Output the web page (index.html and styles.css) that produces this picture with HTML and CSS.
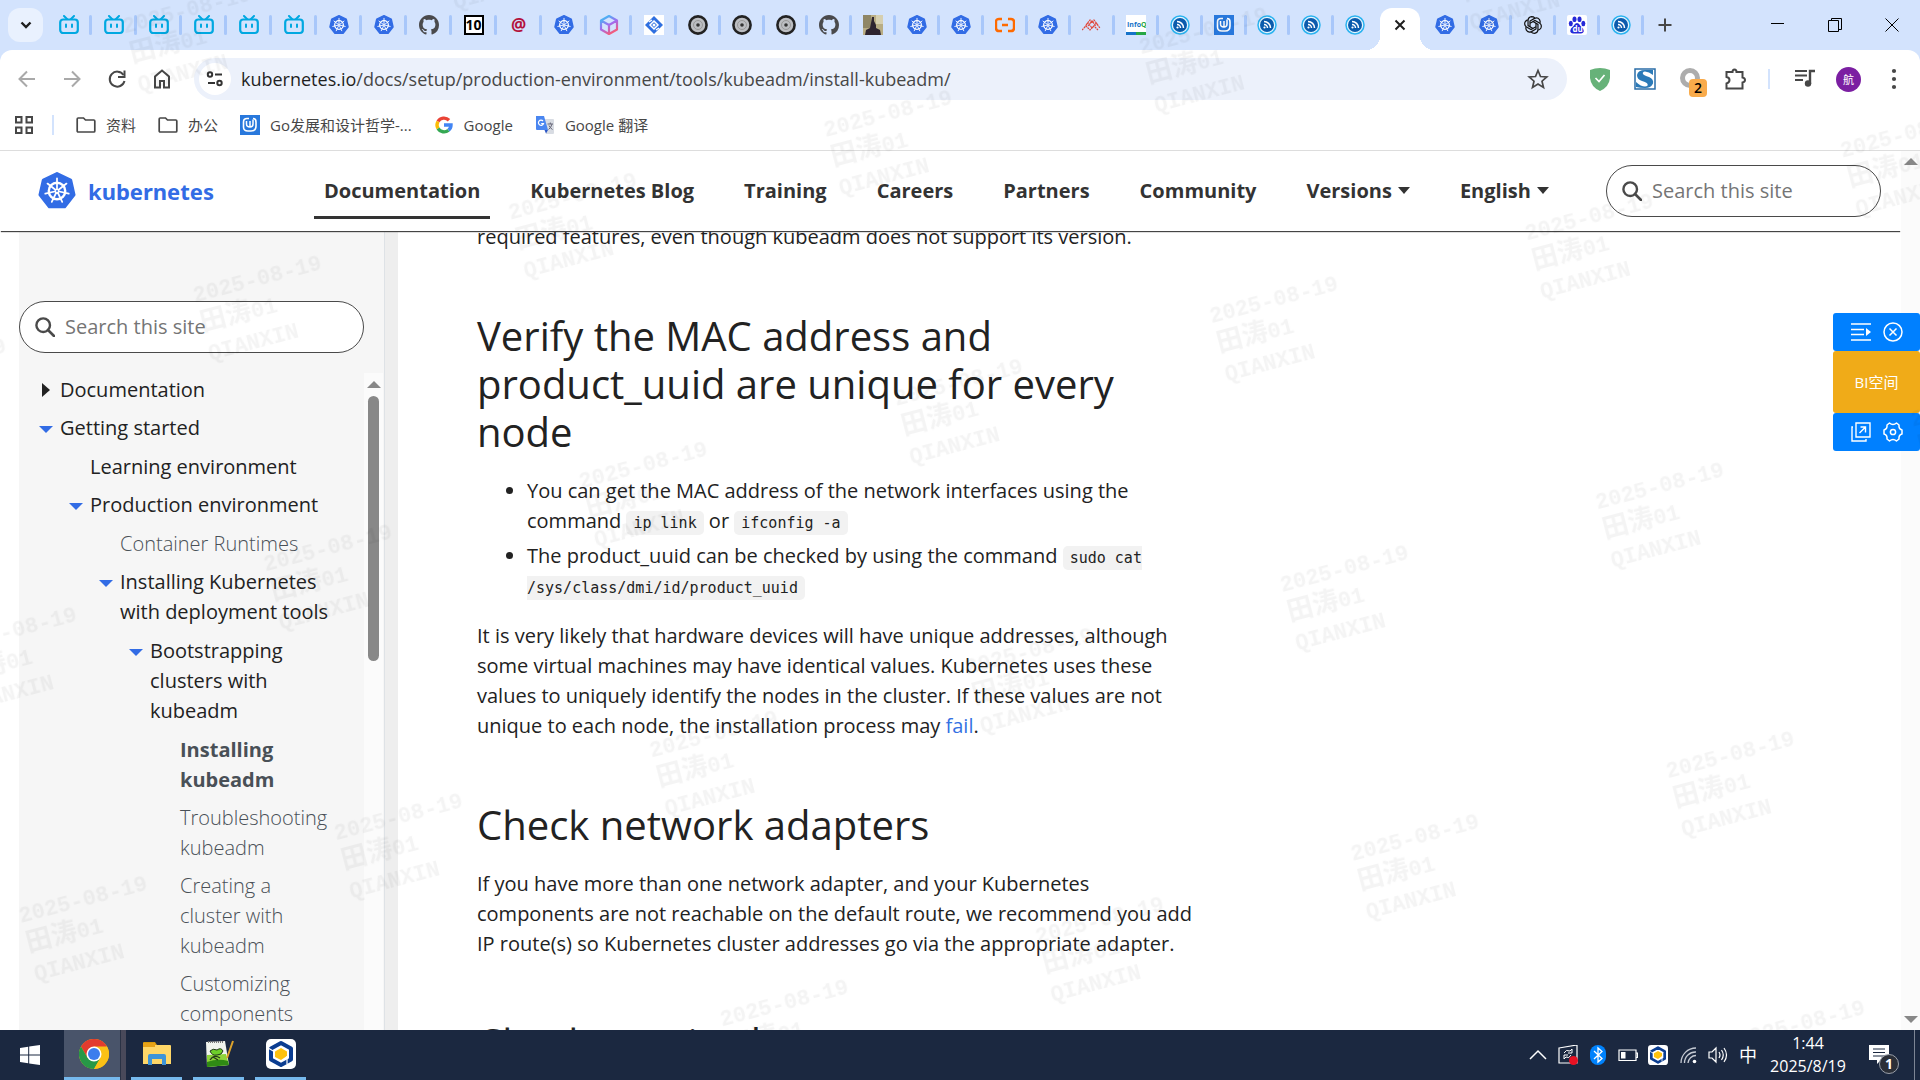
FILE: index.html
```
<!DOCTYPE html>
<html lang="en">
<head>
    <meta charset="UTF-8">
    <title>Installing kubeadm | Kubernetes</title>
    <link rel="stylesheet" href="styles.css">
</head>
<body>
    <svg class="sprite" aria-hidden="true">
        <symbol id="bili" viewBox="0 0 20 20">
            <path d="M5 1l3 3M15 1l-3 3" stroke="#00a8e1" stroke-width="2" stroke-linecap="round"/>
            <rect x="1.200" y="4.500" width="17.600" height="13.500" rx="3" fill="#d3e3fd" stroke="#00a8e1" stroke-width="2.200"/>
            <path d="M7 9.500v2.500M13 9.500v2.500" stroke="#00a8e1" stroke-width="2" stroke-linecap="round"/>
        </symbol>
        <symbol id="k8s" viewBox="0 0 24 24">
            <path d="M12 1L20.600 5.100L22.700 14.400L16.800 21.900H7.200L1.300 14.400L3.400 5.100Z" fill="#326ce5" stroke="#326ce5" stroke-width="2" stroke-linejoin="round"/>
            <circle cx="12" cy="12" r="5.200" fill="none" stroke="#fff" stroke-width="1.500"/>
            <path d="M12 12V4M12 12L18 7.300M12 12L19.400 13.700M12 12L15.300 18.900M12 12L8.700 18.900M12 12L4.600 13.700M12 12L6 7.300" stroke="#fff" stroke-width="1.100" stroke-linecap="round"/>
            <circle cx="12" cy="12" r="1.500" fill="#fff"/>
            <circle cx="12" cy="12" r=".6" fill="#326ce5"/>
        </symbol>
        <symbol id="github" viewBox="0 0 16 16">
            <path fill="#4a4a4c" d="M8 0C3.580 0 0 3.580 0 8c0 3.540 2.290 6.530 5.470 7.590.4.070.55-.17.55-.38 0-.19-.01-.82-.01-1.490-2.010.37-2.530-.49-2.690-.94-.09-.23-.48-.94-.82-1.130-.28-.15-.68-.52-.01-.53.63-.01 1.080.58 1.230.82.72 1.210 1.870.87 2.330.66.070-.52.28-.87.51-1.070-1.780-.2-3.640-.89-3.640-3.950 0-.87.31-1.590.82-2.150-.08-.2-.36-1.020.08-2.120 0 0 .67-.21 2.200.82.64-.18 1.320-.27 2-.27s1.360.09 2 .27c1.530-1.040 2.200-.82 2.200-.82.44 1.100.16 1.920.08 2.120.51.56.82 1.270.82 2.150 0 3.070-1.870 3.750-3.650 3.950.29.25.54.73.54 1.480 0 1.070-.01 1.930-.01 2.200 0 .21.15.46.55.38A8 8 0 0 0 16 8c0-4.420-3.580-8-8-8z"/>
        </symbol>
        <symbol id="cube" viewBox="0 0 20 20">
            <defs>
                <linearGradient id="cube-fill" gradientUnits="userSpaceOnUse" x1="4" y1="1" x2="14" y2="19">
                    <stop offset="0" stop-color="#35c4f5"/>
                    <stop offset=".5" stop-color="#a06cf0"/>
                    <stop offset="1" stop-color="#ff5a6a"/>
                </linearGradient>
            </defs>
            <path d="M10 1L18 5.500V14.500L10 19L2 14.500V5.500ZM2 5.500L10 10L18 5.500M10 10V19" fill="none" stroke="url(#cube-fill)" stroke-width="2.200" stroke-linejoin="round"/>
        </symbol>
        <symbol id="diamond" viewBox="0 0 20 20">
            <path d="M0 0h20v20H0z" fill="#fff"/>
            <path d="M10 1L19 10L10 19L1 10Z" fill="#2f6fe0"/>
            <path d="M10 6L14 10L10 14L6 10ZM5 7l3-2M15 13l-3 2" stroke="#fff" stroke-width="1.500" fill="none"/>
            <circle cx="10" cy="10" r="1.500" fill="#fff"/>
        </symbol>
        <symbol id="disc" viewBox="0 0 20 20">
            <circle cx="10" cy="10" r="8.600" fill="#bcbec2" stroke="#222" stroke-width="2.600"/>
            <circle cx="10" cy="10" r="4.500" fill="none" stroke="#999" stroke-width="1"/>
            <circle cx="10" cy="10" r="1.800" fill="#333"/>
        </symbol>
        <symbol id="photo" viewBox="0 0 20 20">
            <path d="M0 0h20v20H0z" fill="#b9ad84"/>
            <path d="M0 0h8v13H0z" fill="#8f8665"/>
            <path d="M13 0h7v9h-7z" fill="#d6cfb0"/>
            <path d="M9 2l2 0 0 4 2 4 0 3 4 2 1 5H2l1-5 4-2 1-5z" fill="#2e2430"/>
        </symbol>
        <symbol id="aliyun" viewBox="0 0 20 20">
            <path d="M7 4H4Q1 4 1 7V13Q1 16 4 16H7M13 4H16Q19 4 19 7V13Q19 16 16 16H13M7 10H13" fill="none" stroke="#ff6a00" stroke-width="2.400"/>
        </symbol>
        <symbol id="peaks" viewBox="0 0 20 20">
            <path d="M4 10L8 5L10 8L12 5L16 10M2 13L6 8L10 13L14 8L18 13M6 11L10 6L14 11M0 15L4 11L8 15L12 11L16 15" fill="none" stroke="#e0483c" stroke-width="1.200" stroke-dasharray="2 .6"/>
        </symbol>
        <symbol id="infoq" viewBox="0 0 20 20">
            <path d="M0 0h20v20H0z" fill="#fff"/>
            <path d="M0 17h10v3H0z" fill="#1673c9"/>
            <path d="M10 17h10v3H10z" fill="#28a745"/>
            <text x="1" y="12" class="infoq-text" fill="#1673c9">Info<tspan fill="#28a745">Q</tspan></text>
        </symbol>
        <symbol id="feed" viewBox="0 0 20 20">
            <circle cx="10" cy="10" r="9" fill="#e6f6ff" stroke="#2bb3f0" stroke-width="1.500"/>
            <circle cx="10" cy="10" r="7" fill="#0b5cad"/>
            <path d="M7 6.500A6.500 6.500 0 0 1 13.500 13M7 9.500A3.500 3.500 0 0 1 10.500 13" fill="none" stroke="#fff" stroke-width="1.500"/>
            <circle cx="7.500" cy="12.500" r="1.100" fill="#fff"/>
        </symbol>
        <symbol id="gocn" viewBox="0 0 20 20">
            <path d="M0 0h20v20H0z" fill="#2878dc"/>
            <path d="M6.500 6V9Q6.500 12 10 12V6M10 12Q13 12 13 9V4.500" fill="none" stroke="#fff" stroke-width="1.500"/>
            <path d="M9 3.500H7Q3.500 3.500 3.500 7V12Q3.500 16 8 16H11Q16 16 16 11V7Q16 3.500 13 3.500" fill="none" stroke="#fff" stroke-width="1.600"/>
        </symbol>
        <symbol id="openai" viewBox="0 0 20 20">
            <g fill="none" stroke="#111" stroke-width="1.200">
                <path id="petal" d="M7 11.700V6L11.500 3.400Q14.500 2 16.500 4.600Q17.500 6.300 17 8"/>
                <use href="#petal" transform="rotate(60 10 10)"/>
                <use href="#petal" transform="rotate(120 10 10)"/>
                <use href="#petal" transform="rotate(180 10 10)"/>
                <use href="#petal" transform="rotate(240 10 10)"/>
                <use href="#petal" transform="rotate(300 10 10)"/>
            </g>
        </symbol>
        <symbol id="baidu" viewBox="0 0 20 20">
            <rect width="20" height="20" rx="2" fill="#fff"/>
            <g fill="#2529d8">
                <ellipse cx="3.800" cy="8.500" rx="2" ry="2.700"/>
                <ellipse cx="7.500" cy="4.200" rx="2" ry="2.800"/>
                <ellipse cx="12.500" cy="4.200" rx="2" ry="2.800"/>
                <ellipse cx="16.300" cy="8.500" rx="2" ry="2.700"/>
                <path d="M10 8Q12 8 13.500 11L16 13.500Q18 18 14 18.500H6Q2 18 4 13.500L6.500 11Q8 8 10 8Z"/>
            </g>
            <text x="5.500" y="17" class="baidu-text" fill="#fff">du</text>
        </symbol>
        <symbol id="folder" viewBox="0 0 20 20">
            <path d="M1.200 4Q1.200 3 2.200 3H7.500L9.500 5H17.800Q18.800 5 18.800 6V16Q18.800 17 17.800 17H2.200Q1.200 17 1.200 16Z" fill="none" stroke="#474747" stroke-width="1.700"/>
        </symbol>
        <symbol id="search" viewBox="0 0 20 20">
            <circle cx="8.200" cy="8.200" r="6.800" fill="none" stroke="#4a4a4a" stroke-width="2.400"/>
            <path d="M13 13L19 19" stroke="#4a4a4a" stroke-width="2.600" stroke-linecap="round"/>
        </symbol>
        <symbol id="hexapp" viewBox="0 0 30 30">
            <rect width="30" height="30" rx="5" fill="#fff"/>
            <path d="M15 4L25 9.500V20.500L15 26L5 20.500V9.500Z" fill="none" stroke="#0b3d91" stroke-width="4" stroke-linejoin="round"/>
            <path d="M15 9L21 12.500V17L15 21L9 18V12.500Z" fill="#ffc20e"/>
            <path d="M2 9l7 4M21 17v8" stroke="#fff" stroke-width="1.200"/>
        </symbol>
    </svg>

    <header class="browser">
        <div class="tab-strip">
            <button class="tab-search" aria-label="Search tabs">
                <svg width="12" height="8" viewBox="0 0 12 8"><path d="M1.500 1.500L6 6L10.500 1.500" fill="none" stroke="#1f1f1f" stroke-width="2.400"/></svg>
            </button>
            <div class="tabs tabs-first">
                <span class="tab"><svg><use href="#bili"/></svg></span>
                <span class="tab"><svg><use href="#bili"/></svg></span>
                <span class="tab"><svg><use href="#bili"/></svg></span>
                <span class="tab"><svg><use href="#bili"/></svg></span>
                <span class="tab"><svg><use href="#bili"/></svg></span>
                <span class="tab"><svg><use href="#bili"/></svg></span>
                <span class="tab"><svg><use href="#k8s"/></svg></span>
                <span class="tab"><svg><use href="#k8s"/></svg></span>
                <span class="tab"><svg><use href="#github"/></svg></span>
                <span class="tab"><b class="fav-ten">10</b></span>
                <span class="tab"><b class="fav-at">@</b></span>
                <span class="tab"><svg><use href="#k8s"/></svg></span>
                <span class="tab"><svg><use href="#cube"/></svg></span>
                <span class="tab"><svg><use href="#diamond"/></svg></span>
            </div>
            <div class="tabs tabs-second">
                <span class="tab"><svg><use href="#disc"/></svg></span>
                <span class="tab"><svg><use href="#disc"/></svg></span>
                <span class="tab"><svg><use href="#disc"/></svg></span>
                <span class="tab"><svg><use href="#github"/></svg></span>
                <span class="tab"><svg><use href="#photo"/></svg></span>
                <span class="tab"><svg><use href="#k8s"/></svg></span>
                <span class="tab"><svg><use href="#k8s"/></svg></span>
                <span class="tab"><svg><use href="#aliyun"/></svg></span>
                <span class="tab"><svg><use href="#k8s"/></svg></span>
                <span class="tab"><svg><use href="#peaks"/></svg></span>
                <span class="tab"><svg><use href="#infoq"/></svg></span>
                <span class="tab"><svg><use href="#feed"/></svg></span>
                <span class="tab"><svg><use href="#gocn"/></svg></span>
                <span class="tab"><svg><use href="#feed"/></svg></span>
                <span class="tab"><svg><use href="#feed"/></svg></span>
                <span class="tab no-line"><svg><use href="#feed"/></svg></span>
            </div>
            <div class="tab-active">
                <button aria-label="Close tab"><svg width="12" height="12" viewBox="0 0 12 12"><path d="M1.500 1.500L10.500 10.500M10.500 1.500L1.500 10.500" stroke="#1f1f1f" stroke-width="2"/></svg></button>
            </div>
            <div class="tabs tabs-last">
                <span class="tab"><svg><use href="#k8s"/></svg></span>
                <span class="tab"><svg><use href="#k8s"/></svg></span>
                <span class="tab"><svg><use href="#openai"/></svg></span>
                <span class="tab"><svg><use href="#baidu"/></svg></span>
                <span class="tab"><svg><use href="#feed"/></svg></span>
            </div>
            <button class="new-tab" aria-label="New tab"><svg width="14" height="14" viewBox="0 0 14 14"><path d="M7 0.500V13.500M0.500 7H13.500" stroke="#474747" stroke-width="2"/></svg></button>
            <div class="window-controls">
                <button aria-label="Minimize"><svg width="14" height="14" viewBox="0 0 14 14"><path d="M0 5.500H13" stroke="#000"/></svg></button>
                <button aria-label="Restore"><svg width="14" height="14" viewBox="0 0 14 14"><path d="M.5 2.500H10.500V13.500H.5ZM3.500 2.500V.5H13.500V11.500H10.500" fill="none" stroke="#000"/></svg></button>
                <button aria-label="Close"><svg width="14" height="14" viewBox="0 0 14 14"><path d="M.5 .5L13.500 13.500M13.500 .5L.5 13.500" stroke="#000"/></svg></button>
            </div>
        </div>

        <div class="toolbar">
            <button class="tool" aria-label="Back"><svg viewBox="0 0 24 24"><path d="M20 12H5M12 4.500L4.500 12L12 19.500" fill="none" stroke="#a9a9a9" stroke-width="2"/></svg></button>
            <button class="tool" aria-label="Forward"><svg viewBox="0 0 24 24"><path d="M4 12H19M12 4.500L19.500 12L12 19.500" fill="none" stroke="#a9a9a9" stroke-width="2"/></svg></button>
            <button class="tool" aria-label="Reload"><svg viewBox="0 0 24 24"><path d="M18.500 8A7.500 7.500 0 1 0 19.500 14" fill="none" stroke="#474747" stroke-width="2"/><path d="M19.500 3.500V10H13" fill="none" stroke="#474747" stroke-width="2"/></svg></button>
            <button class="tool" aria-label="Home"><svg viewBox="0 0 24 24"><path d="M5 20.500V9.500L12 3.500L19 9.500V20.500H14V14H10V20.500Z" fill="none" stroke="#474747" stroke-width="2"/></svg></button>
            <div class="omnibox">
                <button class="site-info" aria-label="Site information"><svg width="18" height="18" viewBox="0 0 18 18"><g fill="none" stroke="#333" stroke-width="2"><circle cx="4" cy="4.500" r="2.200"/><circle cx="13.500" cy="13" r="2.200"/><path d="M9 4.500H16M2 13H9"/></g></svg></button>
                <div class="url" role="textbox" aria-label="Address"><span>kubernetes.io</span>/docs/setup/production-environment/tools/kubeadm/install-kubeadm/</div>
                <button class="star" aria-label="Bookmark this page"><svg width="22" height="22" viewBox="0 0 22 22"><path d="M11 2.500L13.500 8.500L19.800 9L15 13.200L16.500 19.500L11 16.100L5.500 19.500L7 13.200L2.200 9L8.500 8.500Z" fill="none" stroke="#474747" stroke-width="1.700"/></svg></button>
            </div>
            <button class="tool" aria-label="AdGuard"><svg viewBox="0 0 24 24"><path d="M12 1Q17 1 22 3V11Q21 20 12 24Q3 20 2 11V3Q7 1 12 1Z" fill="#67b279"/><path d="M7.500 11L11 14.500L16.500 8" fill="none" stroke="#fff" stroke-width="1.700"/></svg></button>
            <button class="tool" aria-label="Stylus"><svg viewBox="0 0 24 24"><path d="M2 2h20v20H2z" fill="#fff" stroke="#2b6ea8" stroke-width="1.500"/><path d="M20 3V8Q16 4.500 12 4.500Q9 5 10 7Q11 8.500 16 10Q21 12 20 16.500Q18 21 12 21Q7 21 3 20V15Q8 19.500 12 19.500Q15.500 19 14.500 17Q14 15.500 9 14Q4 12.500 4 8Q5 3 12 3Z" fill="#2b7ab8"/></svg></button>
            <button class="tool badged" aria-label="Extension"><svg viewBox="0 0 24 24"><circle cx="12" cy="11" r="7.500" fill="none" stroke="#adadad" stroke-width="5"/></svg><span class="badge">2</span></button>
            <button class="tool" aria-label="Extensions"><svg viewBox="0 0 24 24"><path d="M3.500 5H9.500Q9.500 2.500 11.500 2.500Q13.500 2.500 13.500 5H19.500V10.500Q22 11 22 13Q22 15 19.500 15.500V21.500H3.500V16.500Q6.500 15.500 6.500 13Q6.500 10.500 3.500 10Z" fill="none" stroke="#474747" stroke-width="2"/></svg></button>
            <span class="tool-line"></span>
            <button class="tool" aria-label="Media"><svg viewBox="0 0 24 24"><path d="M3 4H15M3 8.500H15M3 13H11" stroke="#474747" stroke-width="2"/><path d="M18 17V4H23" fill="none" stroke="#474747" stroke-width="2.400"/><circle cx="16" cy="16.500" r="3.200" fill="#474747"/></svg></button>
            <button class="tool" aria-label="Profile"><span class="avatar">航</span></button>
            <button class="tool" aria-label="Menu"><svg viewBox="0 0 24 24"><g fill="#474747"><circle cx="12" cy="4" r="2.100"/><circle cx="12" cy="12" r="2.100"/><circle cx="12" cy="20" r="2.100"/></g></svg></button>
        </div>

        <div class="bookmarks">
            <button aria-label="Apps"><svg viewBox="0 0 20 20"><path d="M2 2H7.500V7.500H2ZM12.500 2H18V7.500H12.500ZM2 12.500H7.500V18H2ZM12.500 12.500H18V18H12.500Z" fill="none" stroke="#474747" stroke-width="2"/></svg></button>
            <span class="bookmark-line"></span>
            <a href="#"><svg><use href="#folder"/></svg>资料</a>
            <a href="#"><svg><use href="#folder"/></svg>办公</a>
            <a href="#"><svg><use href="#gocn"/></svg>Go发展和设计哲学-...</a>
            <a href="#"><svg viewBox="0 0 20 20"><g fill="none" stroke-width="3.400"><path d="M4 6.500A7 7 0 0 1 15 5.200" stroke="#ea4335"/><path d="M4 13.500A7 7 0 0 1 4 6.500" stroke="#fbbc05"/><path d="M14.500 15.200A7 7 0 0 1 4 13.500" stroke="#34a853"/><path d="M10 10H17Q17 13.500 14.500 15.200" stroke="#4285f4"/></g></svg>Google</a>
            <a href="#"><svg viewBox="0 0 20 20"><path d="M8 4H18Q19 4 19 5V18Q19 19 18 19H11Z" fill="#d8dce3"/><path d="M1 1H9L13 15H2Q1 15 1 14Z" fill="#4a86f0"/><path d="M9.500 15H13L11 18.500Z" fill="#2a56c6"/><path d="M8 6A2.600 2.600 0 1 0 8.500 8.500H6.200" fill="none" stroke="#fff" stroke-width="1.200"/><path d="M12.500 9H18M15.300 7.500V9M17 9Q16 13 13.500 14.500M14 10.500Q15 13 17.500 14.500" fill="none" stroke="#667" stroke-width="1"/></svg>Google 翻译</a>
        </div>
    </header>

    <div class="viewport">
        <div class="page">
            <header class="site-header">
                <a class="brand" href="#"><svg><use href="#k8s"/></svg>kubernetes</a>
                <nav class="site-nav">
                    <a class="current" href="#">Documentation</a>
                    <a href="#">Kubernetes Blog</a>
                    <a href="#">Training</a>
                    <a href="#">Careers</a>
                    <a href="#">Partners</a>
                    <a href="#">Community</a>
                    <button>Versions<i class="caret"></i></button>
                    <button>English<i class="caret"></i></button>
                </nav>
                <label class="search-box">
                    <svg><use href="#search"/></svg>
                    <input type="search" placeholder="Search this site" aria-label="Search this site">
                </label>
            </header>

            <div class="columns">
                <aside class="sidebar">
                    <label class="search-box">
                        <svg><use href="#search"/></svg>
                        <input type="search" placeholder="Search this site" aria-label="Search the docs">
                    </label>
                    <div class="tree-scroll">
                        <ul class="tree">
                            <li class="closed"><a href="#">Documentation</a></li>
                            <li class="open"><a href="#">Getting started</a>
                                <ul>
                                    <li><a href="#">Learning environment</a></li>
                                    <li class="open"><a href="#">Production environment</a>
                                        <ul>
                                            <li><a class="leaf" href="#">Container Runtimes</a></li>
                                            <li class="open"><a href="#">Installing Kubernetes with deployment tools</a>
                                                <ul>
                                                    <li class="open"><a href="#">Bootstrapping clusters with kubeadm</a>
                                                        <ul>
                                                            <li><a class="leaf active" href="#">Installing kubeadm</a></li>
                                                            <li><a class="leaf" href="#">Troubleshooting kubeadm</a></li>
                                                            <li><a class="leaf" href="#">Creating a cluster with kubeadm</a></li>
                                                            <li><a class="leaf" href="#">Customizing components</a></li>
                                                        </ul>
                                                    </li>
                                                </ul>
                                            </li>
                                        </ul>
                                    </li>
                                </ul>
                            </li>
                        </ul>
                        <div class="tree-bar">
                            <i class="arrow-up"></i>
                            <span class="thumb"></span>
                        </div>
                    </div>
                </aside>
                <div class="gutter"></div>
                <main class="content">
                    <p>required features, even though kubeadm does not support its version.</p>
                    <h2>Verify the MAC address and product_uuid are unique for every node</h2>
                    <ul>
                        <li>You can get the MAC address of the network interfaces using the command <code>ip link</code> or <code>ifconfig -a</code></li>
                        <li>The product_uuid can be checked by using the command <code>sudo cat /sys/class/dmi/id/product_uuid</code></li>
                    </ul>
                    <p>It is very likely that hardware devices will have unique addresses, although some virtual machines may have identical values. Kubernetes uses these values to uniquely identify the nodes in the cluster. If these values are not unique to each node, the installation process may <a href="#">fail</a>.</p>
                    <h2>Check network adapters</h2>
                    <p>If you have more than one network adapter, and your Kubernetes components are not reachable on the default route, we recommend you add IP route(s) so Kubernetes cluster addresses go via the appropriate adapter.</p>
                    <h2>Check required ports</h2>
                </main>
            </div>
        </div>
        <div class="page-bar">
            <i class="arrow-up"></i>
            <i class="arrow-down"></i>
        </div>

        <div class="float-panel">
            <div class="float-row">
                <button aria-label="Collapse"><svg viewBox="0 0 20 20"><path d="M0 2H20M0 7.500H13M0 12.500H13M0 18H20" stroke="#fff" stroke-width="1.600"/><path d="M15 6L20 10L15 14Z" fill="#fff"/></svg></button>
                <button aria-label="Close panel"><svg viewBox="0 0 20 20"><circle cx="10" cy="10" r="9" fill="none" stroke="#fff" stroke-width="1.500"/><path d="M6.500 6.500L13.500 13.500M13.500 6.500L6.500 13.500" stroke="#fff" stroke-width="1.500"/></svg></button>
            </div>
            <button class="float-main">BI空间</button>
            <div class="float-row">
                <button aria-label="Open in window"><svg viewBox="0 0 20 20"><path d="M5 1H19V15H5ZM2 5H1V19H15V17M8.500 11L14.500 5M9.500 5H14.500V10.500" fill="none" stroke="#fff" stroke-width="1.400"/></svg></button>
                <button aria-label="Settings"><svg viewBox="0 0 20 20"><path d="M6.500 1Q10 4 13.500 1L16 3Q15.500 7 19 8V12Q15.500 13 16 17L13.500 19Q10 16 6.500 19L4 17Q4.500 13 1 12V8Q4.500 7 4 3Z" fill="none" stroke="#fff" stroke-width="1.500" stroke-linejoin="round"/><circle cx="10" cy="10" r="2.600" fill="none" stroke="#fff" stroke-width="1.500"/></svg></button>
            </div>
        </div>
    </div>

    <svg class="watermark" aria-hidden="true">
        <pattern id="mark" width="326" height="278" patternUnits="userSpaceOnUse" patternTransform="rotate(-14.700)">
            <text x="112" y="64">2025-08-19</text>
            <text x="112" y="94" class="mark-cjk">田涛<tspan class="mark-num">01</tspan></text>
            <text x="112" y="124">QIANXIN</text>
        </pattern>
        <rect width="100%" height="100%" fill="url(#mark)"/>
    </svg>

    <footer class="taskbar">
        <button class="start" aria-label="Start"><svg width="20" height="20" viewBox="0 0 20 20"><path d="M0 3L8.200 1.800V9.500H0ZM9.200 1.600L20 0V9.500H9.200ZM0 10.500H8.200V18.200L0 17ZM9.200 10.500H20V20L9.200 18.400Z" fill="#fff"/></svg></button>
        <div class="apps">
            <button class="app app-current" aria-label="Chrome"><svg viewBox="0 0 30 30"><circle cx="15" cy="15" r="15" fill="#fbc116"/><path d="M2 7.500A15 15 0 0 1 28 7.500H15L8.500 18.700Z" fill="#e33b2e"/><path d="M2 7.500A15 15 0 0 0 15 30L21.500 18.700L8.500 18.700Z" fill="#279847"/><path d="M28 7.500A15 15 0 0 1 15 30L21.500 18.700V10Z" fill="#fbc116"/><circle cx="15" cy="15" r="7.500" fill="#fff"/><circle cx="15" cy="15" r="6" fill="#3b7ded"/></svg></button>
            <button class="app" aria-label="File Explorer"><svg viewBox="0 0 30 30"><path d="M1 4Q1 3 2 3H13L15 6H1Z" fill="#d99a0b"/><path d="M1 6H28Q29 6 29 7V25H1Z" fill="#ffd768"/><path d="M1 4H13V8H1Z" fill="#e8a317"/><path d="M6 17Q6 15 8 15H22Q24 15 24 17V26H20V20H10V26H6Z" fill="#3e94d8"/></svg></button>
            <button class="app" aria-label="Notepad++"><svg viewBox="0 0 30 30"><path d="M2 3L21 2L25 26L3 28Z" fill="#f1f4ee"/><path d="M3 16L22 15L25 26L3 28Z" fill="#8ed43a"/><path d="M3 23Q14 19 24 22L25 26L3 28Z" fill="#2f8a14"/><path d="M6 12Q9 9 13 11Q17 8 19 12Q18 16 13 16Q8 17 6 12Z" fill="#6dcf2a" stroke="#22381a" stroke-width="1"/><path d="M6 21Q10 15 16 19M9 18l5 3" fill="none" stroke="#22381a" stroke-width="1.300"/><path d="M4 3h16" stroke="#777" stroke-width="2" stroke-dasharray="1 1"/><path d="M29 2L23 19" stroke="#dca22c" stroke-width="2"/></svg></button>
            <button class="app" aria-label="Workspace"><svg><use href="#hexapp"/></svg></button>
        </div>
        <div class="tray">
            <button aria-label="Show hidden icons"><svg viewBox="0 0 20 20"><path d="M2 14L10 6L18 14" fill="none" stroke="#fff" stroke-width="1.500"/></svg></button>
            <button aria-label="Sync"><svg viewBox="0 0 20 20"><path d="M1 3L19 0V18H1Z" fill="none" stroke="#fff" stroke-width="1.200"/><path d="M6 8Q8 4 12 6L14 4V8H10M13 10Q11 14 8 12L6 14V10H10" fill="none" stroke="#fff"/><circle cx="15.500" cy="15.500" r="4.500" fill="#e81123"/></svg></button>
            <button aria-label="Bluetooth"><svg viewBox="0 0 20 20"><rect x="2" width="16" height="20" rx="8" fill="#0082fc"/><path d="M6 6L14 13.500L10 17V3L14 6.500L6 14" fill="none" stroke="#fff" stroke-width="1.300"/></svg></button>
            <button aria-label="Battery"><svg viewBox="0 0 20 20"><path d="M1 5H18V15.500H1ZM18 8H19.500V12.500H18" fill="none" stroke="#fff" stroke-width="1.200"/><path d="M3 7H7.500V13.500H3Z" fill="#fff"/></svg></button>
            <button aria-label="Workspace"><svg><use href="#hexapp"/></svg></button>
            <button aria-label="Network"><svg viewBox="0 0 20 20"><g fill="none" stroke="#c5cad3" stroke-width="1.300"><path d="M3 18A15 15 0 0 1 18 3"/><path d="M6.500 18A11 11 0 0 1 18 7"/><path d="M10 18A8 8 0 0 1 18 10.500"/></g><circle cx="16.500" cy="16.500" r="1.800" fill="#fff"/></svg></button>
            <button aria-label="Volume"><svg viewBox="0 0 20 20"><path d="M1 7H4L8 3V17L4 13H1ZM11 7Q13 10 11 13M13.500 5Q17 10 13.500 15M16 3Q21 10 16 17" fill="none" stroke="#fff" stroke-width="1.200"/></svg></button>
            <button class="ime" aria-label="Input method">中</button>
            <div class="clock"><time>1:44</time><span>2025/8/19</span></div>
            <button class="notices" aria-label="Notifications"><svg width="20" height="20" viewBox="0 0 20 20"><path d="M0 0H20V15H12L8 19V15H0Z" fill="#fff"/><path d="M4 4H16M4 7.500H16M4 11H16" stroke="#1b2840" stroke-width="1.200"/></svg><span>1</span></button>
        </div>
    </footer>
</body>
</html>
```
FILE: styles.css
```
* {
    box-sizing: border-box;
}
body {
    margin: 0;
    height: 100vh;
    display: flex;
    flex-direction: column;
    overflow: hidden;
    font-family: "Open Sans", "Noto Sans CJK SC", sans-serif;
    font-size: 20px;
    line-height: 30px;
    color: #222;
    background-color: #fff;
}
a {
    color: inherit;
    text-decoration: none;
}
button {
    display: flex;
    align-items: center;
    justify-content: center;
    padding: 0;
    border: 0;
    background: none;
    font: inherit;
    color: inherit;
}
svg {
    display: block;
    flex: none;
}
.sprite {
    position: absolute;
    width: 0;
    height: 0;
}
.infoq-text {
    font-size: 7px;
    font-weight: bold;
}
.baidu-text {
    font-size: 8px;
    font-weight: bold;
}

/* Tabs */
.browser {
    background-color: #d3e3fd;
}
.tab-strip {
    display: flex;
    align-items: center;
    height: 50px;
    padding-left: 8px;
}
.tab-search {
    width: 35px;
    height: 34px;
    margin-right: 3px;
    border-radius: 12px;
    background-color: #e9f1fe;
}
.tabs {
    display: flex;
}
.tabs-first {
    width: 630px;
}
.tabs-second {
    width: 701px;
}
.tabs-last {
    width: 220px;
}
.tab {
    position: relative;
    flex: 1;
    display: flex;
    align-items: center;
    justify-content: center;
    height: 20px;
}
.tab svg {
    width: 20px;
    height: 20px;
}
.tab::after {
    content: "";
    position: absolute;
    right: -1px;
    width: 3px;
    height: 20px;
    border-radius: 2px;
    background-color: #a8c7fa;
}
.tab.no-line::after {
    display: none;
}
.fav-ten {
    width: 20px;
    height: 20px;
    border: 2px solid #000;
    background-color: #fff;
    font-size: 14px;
    line-height: 16px;
    text-align: center;
    color: #000;
}
.fav-at {
    font-size: 17px;
    line-height: 20px;
    color: #b3123c;
}
.tab-active {
    position: relative;
    align-self: flex-end;
    display: flex;
    justify-content: center;
    width: 40px;
    height: 42px;
    margin: 0 3px;
    border-radius: 12px 12px 0 0;
    background-color: #fff;
}
.tab-active::before,
.tab-active::after {
    content: "";
    position: absolute;
    bottom: 0;
    width: 14px;
    height: 14px;
}
.tab-active::before {
    right: 100%;
    background: radial-gradient(circle at 0 0, transparent 14px, #fff 14px);
}
.tab-active::after {
    left: 100%;
    background: radial-gradient(circle at 100% 0, transparent 14px, #fff 14px);
}
.tab-active button {
    height: 34px;
}
.new-tab {
    width: 44px;
}
.window-controls {
    display: flex;
    margin-left: auto;
}
.window-controls button {
    width: 57px;
}

/* Toolbar */
.toolbar {
    display: flex;
    align-items: center;
    height: 58px;
    padding: 0 4px;
    border-radius: 12px 12px 0 0;
    background-color: #fff;
}
.tool {
    width: 45px;
}
.tool svg {
    width: 24px;
    height: 24px;
}
.badged {
    position: relative;
}
.badge {
    position: absolute;
    left: 22px;
    top: 12px;
    width: 18px;
    height: 18px;
    border-radius: 4px;
    background-color: #f9ab4b;
    font-size: 14px;
    line-height: 18px;
    font-weight: 600;
    color: #000;
}
.tool-line,
.bookmark-line {
    width: 2px;
    height: 20px;
    background-color: #d3e3fd;
}
.tool-line {
    margin: 0 11px;
}
.avatar {
    width: 25px;
    height: 25px;
    border-radius: 50%;
    background-color: #7b1fa2;
    font-size: 11px;
    line-height: 25px;
    color: #fff;
}
.omnibox {
    flex: 1;
    display: flex;
    align-items: center;
    height: 42px;
    margin: 0 10px;
    padding: 0 18px 0 5px;
    border-radius: 21px;
    background-color: #ecf1fb;
}
.site-info {
    width: 32px;
    height: 32px;
    margin-right: 10px;
    border-radius: 50%;
    background-color: #fff;
}
.url {
    flex: 1;
    font-size: 18px;
    color: #474747;
}
.url span {
    color: #1f1f1f;
}

/* Bookmarks */
.bookmarks {
    display: flex;
    align-items: center;
    height: 43px;
    padding: 0 0 8px 14px;
    border-bottom: 1px solid #ddd;
    background-color: #fff;
    font-size: 15px;
    line-height: 20px;
    color: #474747;
}
.bookmarks svg {
    width: 20px;
    height: 20px;
}
.bookmarks a {
    display: flex;
    align-items: center;
    gap: 10px;
    margin-left: 22px;
}
.bookmark-line {
    margin-left: 18px;
}

/* Page */
.viewport {
    position: relative;
    flex: 1;
    min-height: 0;
    display: flex;
}
.page {
    flex: 1;
    min-width: 0;
    display: flex;
    flex-direction: column;
}
.page-bar {
    width: 19px;
    display: flex;
    flex-direction: column;
    align-items: center;
    justify-content: space-between;
    padding: 7px 0;
    background-color: #fbfbfb;
}
.arrow-up,
.arrow-down {
    border: 7px solid transparent;
}
.arrow-up {
    border-top: 0;
    border-bottom: 7px solid #888;
}
.arrow-down {
    border-bottom: 0;
    border-top: 7px solid #888;
}
.site-header {
    position: relative;
    z-index: 1;
    flex: none;
    display: flex;
    align-items: center;
    height: 80px;
    padding: 0 20px 0 38px;
    background-color: #fff;
    box-shadow: 0 2px 1px -1px #444;
}
.brand {
    display: flex;
    align-items: center;
    gap: 12px;
    width: 276px;
    font-family: "Noto Sans", sans-serif;
    font-size: 22px;
    font-weight: bold;
    color: #326ce5;
}
.brand svg {
    width: 38px;
    height: 38px;
}
.site-nav {
    display: flex;
    gap: 30px;
    font-weight: bold;
    color: #333;
}
.site-nav a,
.site-nav button {
    padding: 12px 10px 10px;
    border-bottom: 3px solid transparent;
}
.site-nav .current {
    border-bottom-color: #333;
}
.caret {
    margin-left: 6px;
    border: 6px solid transparent;
    border-top: 7px solid #333;
    border-bottom: 0;
}
.search-box {
    display: flex;
    align-items: center;
    gap: 10px;
    height: 52px;
    padding: 0 15px;
    border: 1px solid #4a4a4a;
    border-radius: 26px;
    background-color: #fff;
}
.search-box svg {
    width: 20px;
    height: 20px;
}
.search-box input {
    flex: 1;
    min-width: 0;
    padding: 0;
    border: 0;
    outline: 0;
    background: none;
    font: inherit;
}
.search-box input::placeholder {
    color: #757575;
}
.site-header .search-box {
    width: 275px;
    margin-left: auto;
}
.columns {
    flex: 1;
    min-height: 0;
    display: flex;
    overflow: hidden;
}

/* Sidebar */
.sidebar {
    display: flex;
    flex-direction: column;
    width: 366px;
    margin-left: 19px;
    padding-top: 70px;
    border-right: 1px solid #dee2e6;
    background-color: #f6f6f6;
}
.sidebar .search-box {
    flex: none;
    margin-right: 20px;
}
.tree-scroll {
    flex: 1;
    min-height: 0;
    display: flex;
    margin-top: 18px;
    padding-right: 1px;
}
.tree,
.tree ul {
    margin: 0;
    padding: 0;
    list-style: none;
}
.tree {
    flex: 1;
    padding: 0 32px 0 11px;
}
.tree ul {
    padding-top: 1px;
}
.tree li {
    padding-left: 30px;
}
.tree a {
    display: block;
    padding: 4px 0;
}
.tree .open > a::before,
.tree .closed > a::before {
    content: "";
    float: left;
    margin: 13px 0 0 -21px;
    border: 7px solid transparent;
    border-top: 7px solid #326ce5;
    border-bottom: 0;
}
.tree .closed > a::before {
    margin: 8px 0 0 -18px;
    border: 7px solid transparent;
    border-left: 8px solid #222;
    border-right: 0;
}
.tree .leaf {
    font-weight: 300;
    color: #495057;
}
.tree .active {
    font-weight: bold;
}
.tree-bar {
    display: flex;
    flex-direction: column;
    align-items: center;
    gap: 8px;
    width: 19px;
    margin-top: 2px;
    padding-top: 8px;
    background-color: #fbfbfb;
}
.thumb {
    width: 11px;
    height: 265px;
    border-radius: 6px;
    background-color: #888;
}
.gutter {
    width: 13px;
    margin-right: 79px;
    background-color: #eee;
}

/* Docs text */
.content {
    flex: 1;
    max-width: 722px;
    margin-top: -9px;
}
.content p {
    margin: 0 0 20px;
}
.content h2 {
    margin: 60px 0 20px;
    font-size: 40px;
    line-height: 48px;
    font-weight: normal;
}
.content ul {
    margin: 0 0 20px;
    padding-left: 50px;
}
.content li + li {
    margin-top: 5px;
}
.content a {
    color: #3371e3;
}
code {
    padding: 3px 7px;
    border-radius: 5px;
    background-color: #f2f2f2;
    font-family: "DejaVu Sans Mono", monospace;
    font-size: 15px;
    line-height: 20px;
}

/* Floating panel */
.float-panel {
    position: absolute;
    z-index: 2;
    top: 162px;
    right: 0;
    width: 87px;
}
.float-row {
    display: flex;
    justify-content: center;
    align-items: center;
    gap: 12px;
    height: 38px;
    border-radius: 3px;
    background-color: #0080ff;
}
.float-row svg {
    width: 20px;
    height: 20px;
}
.float-main {
    width: 100%;
    height: 62px;
    border-radius: 3px;
    background-color: #f0ab18;
    font-size: 15px;
    color: #fff;
}

/* Watermark */
.watermark {
    position: absolute;
    z-index: 3;
    width: 100%;
    height: calc(100% - 50px);
    pointer-events: none;
    fill: #000;
    opacity: 0.04;
    font-family: "Liberation Mono", monospace;
    font-size: 22px;
    font-weight: bold;
}
.mark-cjk {
    font-family: "Noto Sans CJK SC", sans-serif;
    font-size: 26px;
}
.mark-num {
    font-family: "Liberation Mono", monospace;
    font-size: 22px;
}

/* Taskbar */
.taskbar {
    flex: none;
    display: flex;
    height: 50px;
    background-color: #1b2840;
    color: #fff;
}
.start {
    width: 60px;
    margin-right: 4px;
}
.apps {
    display: flex;
    gap: 11px;
}
.app {
    width: 51px;
    border-bottom: 3px solid #76b9ed;
}
.app svg {
    width: 30px;
    height: 30px;
}
.app-current {
    position: relative;
    width: 56px;
    padding-left: 4px;
    background-color: #49546a;
}
.app-current::after {
    content: "";
    position: absolute;
    top: 0;
    left: 100%;
    width: 5px;
    height: 50px;
    border-left: 1px solid #2a3245;
    border-bottom: 3px solid #76b9ed;
    background-color: #49495a;
}
.tray {
    display: flex;
    margin-left: auto;
    padding-right: 5px;
}
.tray button {
    width: 30px;
}
.tray svg {
    width: 20px;
    height: 20px;
}
.ime {
    font-size: 18px;
}
.clock {
    display: flex;
    flex-direction: column;
    align-items: center;
    width: 90px;
    padding-top: 2px;
    font-size: 16px;
    line-height: 23px;
}
.tray .notices {
    position: relative;
    width: 62px;
    padding-right: 9px;
    border-right: 1px solid #7d8594;
}
.notices span {
    position: absolute;
    left: 26px;
    top: 24px;
    width: 20px;
    height: 20px;
    border: 1px solid #9aa0aa;
    border-radius: 50%;
    background-color: #2b2f38;
    font-size: 14px;
    line-height: 18px;
    font-weight: bold;
}
```
